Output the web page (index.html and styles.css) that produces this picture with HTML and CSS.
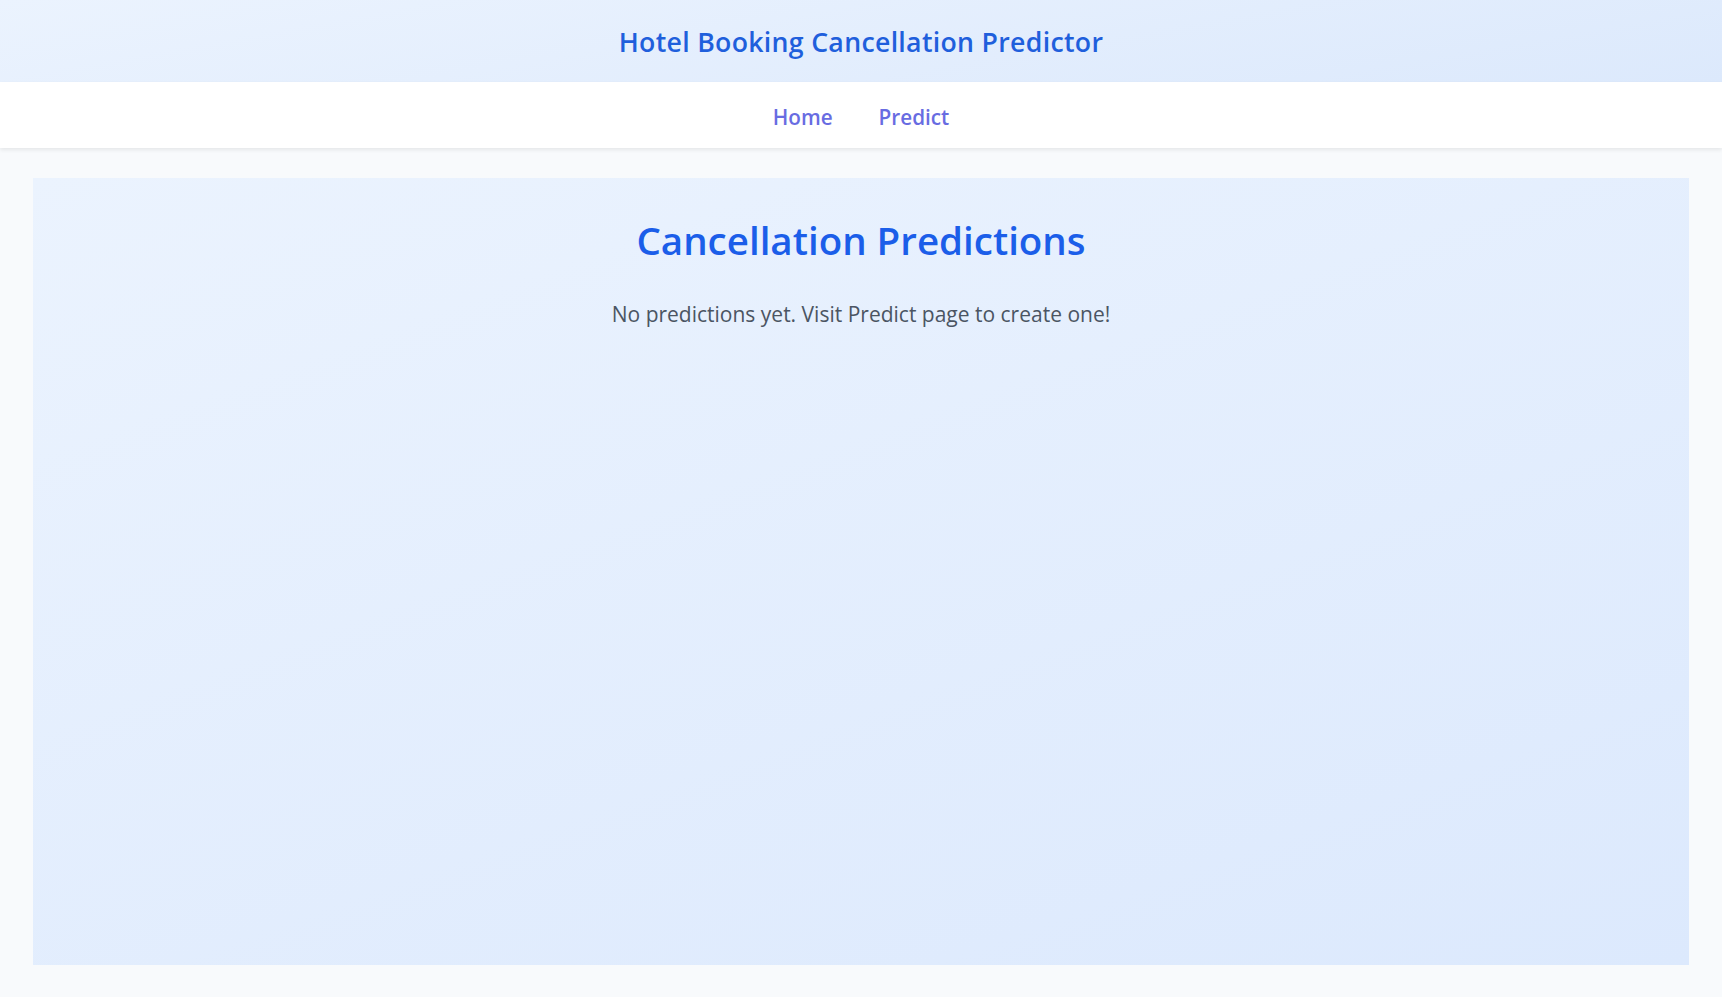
FILE: index.html
```html
<!DOCTYPE html>
<html lang="en">
<head>
<meta charset="utf-8">
<title>Hotel Booking Cancellation Predictor</title>
<link rel="stylesheet" href="styles.css">
</head>
<body>
<header class="site-header">
  <h1 class="site-title">Hotel Booking Cancellation Predictor</h1>
</header>
<nav class="site-nav">
  <a class="nav-link" href="#">Home</a>
  <a class="nav-link" href="#">Predict</a>
</nav>
<main class="page">
  <section class="card">
    <h2 class="card-title">Cancellation Predictions</h2>
    <p class="card-text">No predictions yet. Visit Predict page to create one!</p>
  </section>
</main>
</body>
</html>
```
FILE: styles.css
```css
* { box-sizing: border-box; }
html, body { margin: 0; padding: 0; }
body {
  font-family: "Open Sans", "Noto Sans", sans-serif;
  background: #f8fafc;
  height: 997px;
  display: flex;
  flex-direction: column;
}
.site-header {
  height: 82px;
  display: flex;
  align-items: center;
  justify-content: center;
  background: linear-gradient(170deg, #ebf3fe 0%, #dce9fc 100%);
}
.site-title {
  margin: 0;
  font-size: 26.7px;
  font-weight: 600;
  color: #1f5fdc;
  letter-spacing: 0.3px;
}
.site-nav {
  height: 66px;
  padding-top: 4px;
  display: flex;
  align-items: center;
  justify-content: center;
  gap: 46px;
  background: #ffffff;
  box-shadow: 0 2px 4px rgba(0,0,0,0.08);
  position: relative;
  z-index: 1;
}
.nav-link {
  font-size: 20.7px;
  font-weight: 600;
  color: #686ce2;
  text-decoration: none;
}
.page {
  flex: 1;
  padding: 30px 33px 32px;
  display: flex;
}
.card {
  flex: 1;
  background: linear-gradient(160deg, #ebf3fe 0%, #dce9fd 100%);
  text-align: center;
  padding-top: 37px;
}
.card-title {
  margin: 0;
  font-size: 38.5px;
  font-weight: 600;
  color: #1b5ee9;
  line-height: 1.3;
}
.card-text {
  margin: 35px 0 0;
  font-size: 21px;
  color: #4b5563;
}
```
